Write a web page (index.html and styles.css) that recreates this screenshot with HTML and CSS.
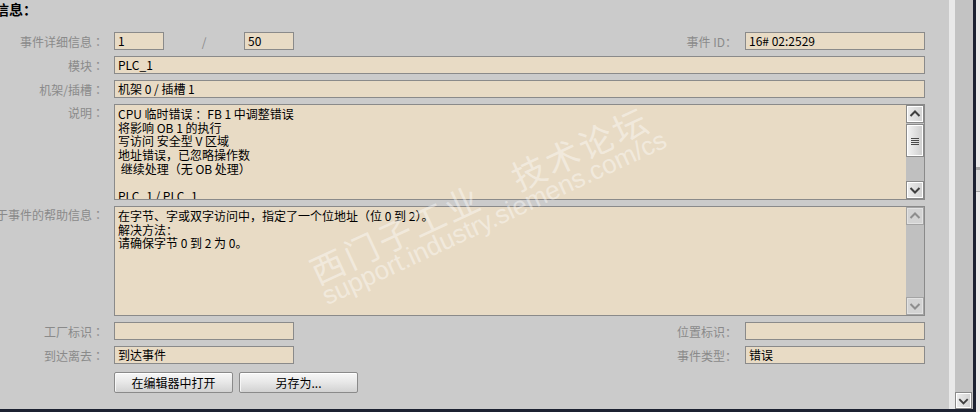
FILE: index.html
```html
<!DOCTYPE html>
<html lang="zh-CN">
<head>
<meta charset="utf-8">
<title>诊断信息</title>
<link rel="stylesheet" href="styles.css">
</head>
<body>
<div class="screen">
  <div class="left">
    <div class="main">
      <div class="content">
        <div class="title">信息<span class="colon">：</span></div>
        <div class="form">
          <div class="lbl">事件详细信息<span class="colon">：</span></div>
          <div class="fields">
            <div class="inp w50">1</div>
            <div class="slash">/</div>
            <div class="inp w50">50</div>
            <div class="spacer"></div>
            <div class="sublbl">事件 ID<span class="colon">：</span></div>
            <div class="inp w180">16# 02:2529</div>
          </div>

          <div class="lbl">模块<span class="colon">：</span></div>
          <div class="inp">PLC_1</div>

          <div class="lbl">机架/插槽<span class="colon">：</span></div>
          <div class="inp">机架 0 / 插槽 1</div>

          <div class="lbl top">说明<span class="colon">：</span></div>
          <div class="area h96">
            <div class="text">CPU 临时错误 ：FB 1 中调整错误
将影响 OB 1 的执行
写访问 安全型 V 区域
地址错误，已忽略操作数
 继续处理（无 OB 处理）

PLC_1 / PLC_1</div>
            <div class="sb">
              <div class="sbtn"><svg viewBox="0 0 16 16" width="16" height="16"><polyline points="3.5,10 8,5.5 12.5,10" class="chev"/></svg></div>
              <div class="thumb"><svg viewBox="0 0 16 16" width="16" height="16"><path d="M4 5.5h8M4 7.5h8M4 9.5h8M4 11.5h8" class="grip"/></svg></div>
              <div class="track"></div>
              <div class="sbtn"><svg viewBox="0 0 16 16" width="16" height="16"><polyline points="3.5,6 8,10.5 12.5,6" class="chev"/></svg></div>
            </div>
          </div>

          <div class="lbl top">关于事件的帮助信息<span class="colon">：</span></div>
          <div class="area h110">
            <div class="text">在字节、字或双字访问中，指定了一个位地址（位 0 到 2）。
解决方法：
请确保字节 0 到 2 为 0。</div>
            <div class="sb">
              <div class="sbtn off"><svg viewBox="0 0 16 16" width="16" height="16"><polyline points="3.5,10 8,5.5 12.5,10" class="chev"/></svg></div>
              <div class="track"></div>
              <div class="sbtn off"><svg viewBox="0 0 16 16" width="16" height="16"><polyline points="3.5,6 8,10.5 12.5,6" class="chev"/></svg></div>
            </div>
          </div>

          <div class="lbl">工厂标识<span class="colon">：</span></div>
          <div class="fields">
            <div class="inp w180"></div>
            <div class="spacer"></div>
            <div class="sublbl">位置标识<span class="colon">：</span></div>
            <div class="inp w180"></div>
          </div>

          <div class="lbl">到达离去<span class="colon">：</span></div>
          <div class="fields">
            <div class="inp w180">到达事件</div>
            <div class="spacer"></div>
            <div class="sublbl">事件类型<span class="colon">：</span></div>
            <div class="inp w180">错误</div>
          </div>

          <div></div>
          <div class="btns">
            <button class="btn">在编辑器中打开</button>
            <button class="btn">另存为...</button>
          </div>
        </div>
      </div>
      <div class="strip"></div>
      <div class="vsb">
        <div class="sbtn corner"><svg viewBox="0 0 16 16" width="16" height="16"><polyline points="3.5,6 8,10.5 12.5,6" class="chev"/></svg></div>
      </div>
      <div class="darkv"></div>
    </div>
    <div class="darkh"></div>
  </div>
  <div class="edge"><div class="edgebox"></div></div>

  <div class="wm">
    <div class="cn">西门子工业　技术论坛</div>
    <div class="url">support.industry.siemens.com/cs</div>
  </div>
</div>
</body>
</html>
```
FILE: styles.css
```css
html, body {
  margin: 0;
  padding: 0;
  overflow: hidden;
}
body {
  font-family: "Noto Sans CJK SC", "Noto Sans", sans-serif;
  font-size: 12px;
  color: #000;
  background: #cbcbcb;
}
.colon {
  font-family: "Noto Sans CJK TC", "Noto Sans CJK SC", sans-serif;
}
.screen {
  position: relative;
  display: flex;
  width: 980px;
  height: 412px;
  overflow: hidden;
}
.left {
  width: 976px;
  display: flex;
  flex-direction: column;
}
.main {
  height: 409px;
  display: flex;
}
.darkh {
  height: 3px;
  background: #1c2131;
}
.content {
  width: 925px;
  padding-right: 24px;
  background: #cbcbcb;
}
.strip {
  width: 6px;
  background: #e9e9e9;
}
.vsb {
  width: 18px;
  background: #c3c3c3;
  display: flex;
  flex-direction: column;
  justify-content: flex-end;
}
.darkv {
  width: 3px;
  background: #1c2131;
}
.edge {
  width: 4px;
  background: #ececec;
  padding-top: 167px;
}
.edgebox {
  height: 21px;
  border-top: 3px solid #a9a9a9;
  border-bottom: 1px solid #a9a9a9;
  background: #dcdcdc;
}

.title {
  height: 18px;
  line-height: 18px;
  margin: 0 0 14px -5px;
  font-size: 14px;
  font-weight: bold;
}

.form {
  display: grid;
  grid-template-columns: 104px 1fr;
  column-gap: 10px;
  row-gap: 6px;
}
.lbl {
  display: flex;
  justify-content: flex-end;
  align-items: center;
  height: 18px;
  white-space: nowrap;
  color: #8a8a8a;
}
.lbl.top {
  align-items: flex-start;
  height: auto;
  padding-top: 1px;
  line-height: 16px;
}
.fields {
  display: flex;
  align-items: center;
  height: 18px;
}
.inp {
  box-sizing: border-box;
  height: 18px;
  border: 1px solid #8a8a8a;
  background: #e8dbc5;
  padding: 0 3px;
  line-height: 15px;
  white-space: nowrap;
  overflow: hidden;
}
.w50 { width: 50px; }
.w180 { width: 180px; }
.slash {
  width: 80px;
  text-align: center;
  color: #8a8a8a;
}
.spacer { flex: 1; }
.sublbl {
  padding-right: 8px;
  color: #8a8a8a;
  white-space: nowrap;
}

.area {
  box-sizing: border-box;
  display: flex;
  border: 1px solid #8a8a8a;
  background: #e8dbc5;
}
.h96 { height: 96px; }
.h110 { height: 110px; }
.text {
  flex: 1;
  padding: 2px 3px 0;
  line-height: 13.7px;
  white-space: pre;
  overflow: hidden;
}
.sb {
  width: 18px;
  display: flex;
  flex-direction: column;
  background: #c0c0c0;
}
.sbtn {
  box-sizing: border-box;
  height: 18px;
  border: 1px solid #8a8a8a;
  box-shadow: inset 0 0 0 1px #ffffff;
  background: linear-gradient(90deg, #ededed, #d2d2d2);
  display: flex;
  align-items: center;
  justify-content: center;
}
.sbtn.off {
  border-color: #a4a4a4;
  box-shadow: inset 0 0 0 1px #e2e2e2;
  background: #d3d3d3;
}
.sbtn.off .chev { stroke: #8e8e8e; }
.sbtn.corner {
  height: 17px;
  width: 17px;
}
.chev {
  fill: none;
  stroke: #404040;
  stroke-width: 2;
}
.thumb {
  box-sizing: border-box;
  height: 33px;
  margin-top: 1px;
  border: 1px solid #8a8a8a;
  box-shadow: inset 0 0 0 1px #ffffff;
  background: linear-gradient(90deg, #f4f4f4, #cdcdcd);
  display: flex;
  align-items: center;
  justify-content: center;
}
.grip {
  stroke: #4a4a4a;
  stroke-width: 1;
}
.track { flex: 1; }

.btns {
  display: flex;
  gap: 6px;
  margin-top: 2px;
}
.btn {
  box-sizing: border-box;
  width: 119px;
  height: 21px;
  padding: 0;
  border: 1px solid #8a8a8a;
  border-radius: 2px;
  box-shadow: inset 0 1px 0 #ffffff, inset 1px 0 0 #f6f6f6;
  background: linear-gradient(#f7f7f7, #e9e9e9 45%, #d2d2d2);
  font-family: "Noto Sans CJK SC", "Noto Sans", sans-serif;
  font-size: 12px;
  line-height: 17px;
  color: #000;
}

.wm {
  position: absolute;
  left: 306px;
  top: 260px;
  transform: rotate(-25deg);
  transform-origin: 0 0;
  color: rgba(255, 255, 255, 0.42);
  pointer-events: none;
  white-space: nowrap;
}
.wm .cn {
  font-size: 34px;
  line-height: 27px;
  letter-spacing: 3px;
}
.wm .url {
  font-family: "Liberation Sans", Arial, sans-serif;
  font-size: 26px;
  line-height: 28px;
}
```
